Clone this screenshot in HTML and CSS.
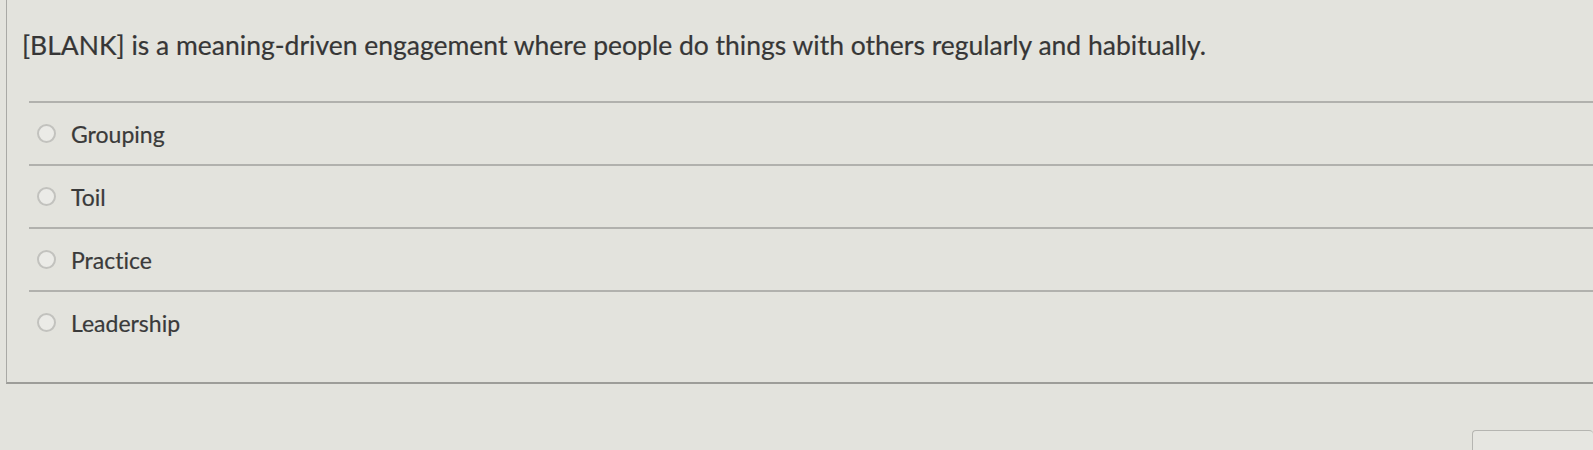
FILE: index.html
```html
<!DOCTYPE html>
<html>
<head>
<meta charset="utf-8">
<link rel="stylesheet" href="styles.css">
</head>
<body>
<div class="panel">
  <p class="question">[BLANK] is a meaning-driven engagement where people do things with others regularly and habitually.</p>
  <ul class="options">
    <li class="option"><span class="radio"></span><span class="label">Grouping</span></li>
    <li class="option"><span class="radio"></span><span class="label">Toil</span></li>
    <li class="option"><span class="radio"></span><span class="label">Practice</span></li>
    <li class="option"><span class="radio"></span><span class="label">Leadership</span></li>
  </ul>
</div>
<div class="footer">
  <div class="button-stub"></div>
</div>
</body>
</html>
```

FILE: styles.css
```css
html, body {
  margin: 0;
  padding: 0;
}
body {
  background: #e3e3dd;
  font-family: "Lato", "Open Sans", sans-serif;
  color: #3b3b3b;
  width: 1593px;
  height: 450px;
  overflow: hidden;
  font-variant-ligatures: none;
}
.panel {
  margin-left: 6px;
  border-left: 1px solid #a9a9a5;
  border-bottom: 2px solid #9d9d99;
  height: 384px;
  box-sizing: border-box;
}
.question {
  margin: 0;
  padding: 27px 0 0 15px;
  font-size: 26.5px;
  line-height: 36px;
  height: 68px;
  box-sizing: border-box;
  color: #363636;
  -webkit-text-stroke: 0.2px #363636;
}
.options {
  list-style: none;
  margin: 33px 0 0 22px;
  padding: 0;
  border-top: 2px solid #b1b1ad;
}
.option {
  display: flex;
  align-items: center;
  height: 61px;
  border-bottom: 2px solid #b1b1ad;
  padding-left: 8px;
  gap: 15px;
  font-size: 23px;
}
.option:last-child {
  border-bottom: none;
}
.radio {
  width: 15px;
  height: 15px;
  border-radius: 50%;
  border: 2px solid #c2c2be;
  background: #ebebe7;
  flex: none;
}
.label {
  color: #3a3a3a;
  -webkit-text-stroke: 0.2px #3a3a3a;
}
.footer {
  display: flex;
  justify-content: flex-end;
  padding-top: 46px;
}
.button-stub {
  width: 120px;
  height: 30px;
  border: 1px solid #b5b5b1;
  border-radius: 4px;
  border-right: none;
  border-bottom: none;
  background: #e6e6e1;
}
```
